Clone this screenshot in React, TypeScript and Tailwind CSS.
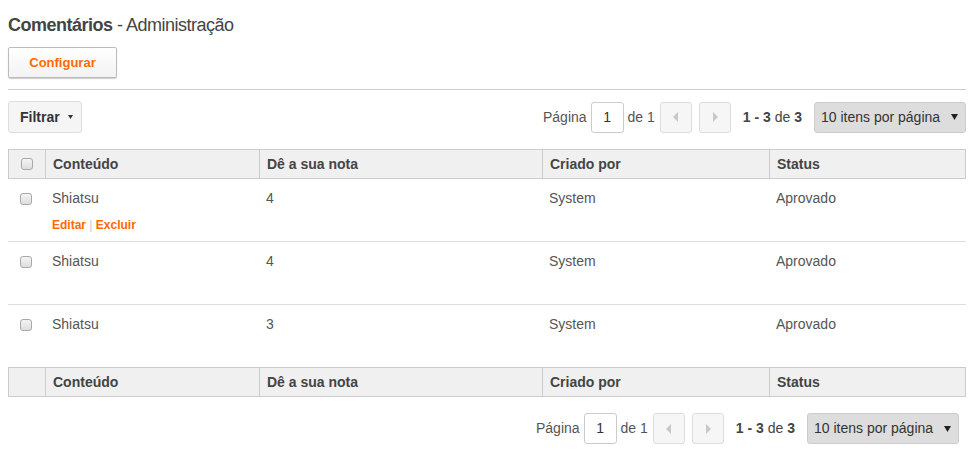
import React from "react";

const font = { fontFamily: '"Liberation Sans", Arial, sans-serif' };

function Checkbox() {
  return (
    <span className="inline-block w-[12px] h-[12px] rounded-[3px] border border-[#a9a9a9] bg-gradient-to-b from-[#f4f4f4] to-[#dedede]" />
  );
}

function Pager() {
  return (
    <div className="flex items-center text-[14px] text-[#555]">
      <span>Página</span>
      <div className="ml-[4px] w-[33px] h-[31px] border border-[#ccc] rounded-[3px] flex items-center justify-center text-[#333] bg-white">
        1
      </div>
      <span className="ml-[4px]">de 1</span>
      <div className="ml-[5px] w-[32px] h-[31px] border border-[#ddd] rounded-[3px] bg-[#f6f6f6] flex items-center justify-center">
        <svg width="6" height="10" viewBox="0 0 6 10">
          <path d="M5 0 L0 5 L5 10 Z" fill="#c8c8c8" />
        </svg>
      </div>
      <div className="ml-[7px] w-[32px] h-[31px] border border-[#ddd] rounded-[3px] bg-[#f6f6f6] flex items-center justify-center">
        <svg width="6" height="10" viewBox="0 0 6 10">
          <path d="M1 0 L6 5 L1 10 Z" fill="#c8c8c8" />
        </svg>
      </div>
      <span className="ml-[12px] text-[#444]">
        <b>1 - 3</b> de <b>3</b>
      </span>
      <div className="ml-[12px] w-[152px] h-[31px] rounded-[3px] border border-[#ccc] bg-[#dddddd] flex items-center justify-between pl-[6px] pr-[7px] text-[#333]">
        <span>10 itens por página</span>
        <svg width="7" height="6" viewBox="0 0 7 6">
          <path d="M0 0 L7 0 L3.5 6 Z" fill="#222" />
        </svg>
      </div>
    </div>
  );
}

const headCols = "grid grid-cols-[36px_214px_283px_227px_196px]";
const bodyCols = "grid grid-cols-[37px_214px_283px_227px_197px]";

function HeaderRow({ check }: { check: boolean }) {
  return (
    <div className={`${headCols} h-[30px] bg-[#f0f0f0] border border-[#cccccc] text-[14px] font-bold text-[#444]`}>
      <div className="flex items-center justify-center">{check && <Checkbox />}</div>
      <div className="border-l border-[#cccccc] flex items-center pl-[7px]">Conteúdo</div>
      <div className="border-l border-[#cccccc] flex items-center pl-[7px]">Dê a sua nota</div>
      <div className="border-l border-[#cccccc] flex items-center pl-[7px]">Criado por</div>
      <div className="border-l border-[#cccccc] flex items-center pl-[7px]">Status</div>
    </div>
  );
}

function Row({ nota, actions, last }: { nota: string; actions?: boolean; last?: boolean }) {
  return (
    <div className={`${bodyCols} text-[14px] text-[#555] ${last ? "h-[62px]" : "h-[63px] border-b border-[#dddddd]"}`}>
      <div className="pl-[12px] pt-[11px]">
        <Checkbox />
      </div>
      <div className="pl-[7px] pt-[10px]">
        <div className="leading-[18px]">Shiatsu</div>
        {actions && (
          <div className="mt-[11px] text-[12px] font-bold text-[#ff6a00] leading-[14px]">
            Editar <span className="text-[#ccc] font-normal">|</span> Excluir
          </div>
        )}
      </div>
      <div className="pl-[7px] pt-[10px] leading-[18px]">{nota}</div>
      <div className="pl-[7px] pt-[10px] leading-[18px]">System</div>
      <div className="pl-[7px] pt-[10px] leading-[18px]">Aprovado</div>
    </div>
  );
}

export default function App() {
  return (
    <div style={font} className="w-[975px] h-[473px] bg-white px-[8px] pt-[13px]">
      <h1 className="text-[18px] leading-[24px] text-[#444] tracking-[-0.5px]">
        <span className="font-bold">Comentários</span> - Administração
      </h1>
      <div className="mt-[10px]">
        <button className="w-[109px] h-[31px] border border-[#bbbbbb] rounded-[2px] bg-gradient-to-b from-white to-[#f3f3f3] shadow-[0_1px_1px_rgba(0,0,0,0.2)] text-[13px] font-bold text-[#ff6a00]">
          Configurar
        </button>
      </div>
      <div className="mt-[11px] border-t border-[#cccccc] w-[958px]" />
      <div className="mt-[11px] flex items-center justify-between w-[958px]">
        <div className="h-[32px] w-[74px] border border-[#dddddd] rounded-[3px] bg-[#f5f5f5] flex items-center pl-[11px] text-[14px] font-bold text-[#333]">
          Filtrar
          <svg className="ml-[8px]" width="5" height="4" viewBox="0 0 5 4">
            <path d="M0 0 L5 0 L2.5 4 Z" fill="#333" />
          </svg>
        </div>
        <Pager />
      </div>
      <div className="mt-[16px] w-[958px]">
        <HeaderRow check />
        <Row nota="4" actions />
        <Row nota="4" />
        <Row nota="3" last />
        <HeaderRow check={false} />
      </div>
      <div className="mt-[16px] w-[951px] flex justify-end">
        <Pager />
      </div>
    </div>
  );
}
